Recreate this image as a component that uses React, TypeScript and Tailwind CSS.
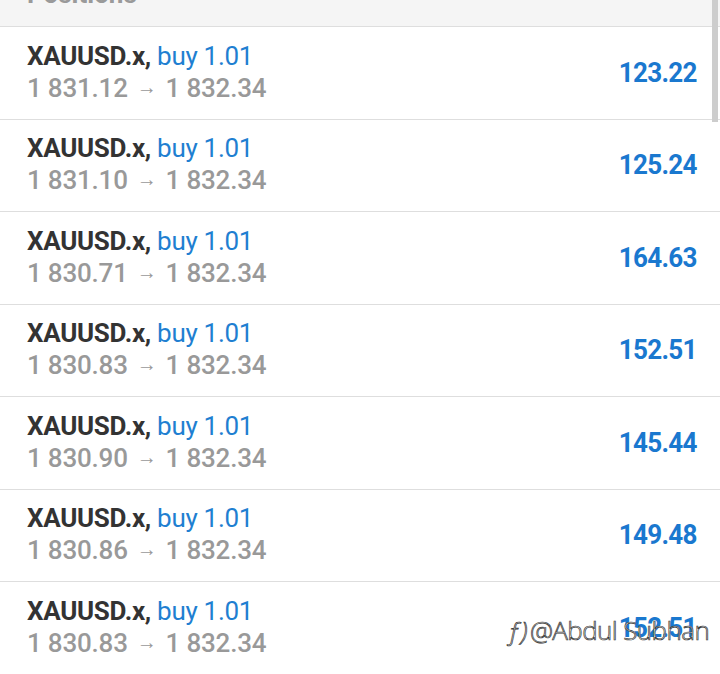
import React from 'react';

interface Position {
  symbol: string;
  side: string;
  volume: string;
  open: string;
  current: string;
  profit: string;
}

const positions: Position[] = [
  { symbol: 'XAUUSD.x', side: 'buy', volume: '1.01', open: '1 831.12', current: '1 832.34', profit: '123.22' },
  { symbol: 'XAUUSD.x', side: 'buy', volume: '1.01', open: '1 831.10', current: '1 832.34', profit: '125.24' },
  { symbol: 'XAUUSD.x', side: 'buy', volume: '1.01', open: '1 830.71', current: '1 832.34', profit: '164.63' },
  { symbol: 'XAUUSD.x', side: 'buy', volume: '1.01', open: '1 830.83', current: '1 832.34', profit: '152.51' },
  { symbol: 'XAUUSD.x', side: 'buy', volume: '1.01', open: '1 830.90', current: '1 832.34', profit: '145.44' },
  { symbol: 'XAUUSD.x', side: 'buy', volume: '1.01', open: '1 830.86', current: '1 832.34', profit: '149.48' },
  { symbol: 'XAUUSD.x', side: 'buy', volume: '1.01', open: '1 830.83', current: '1 832.34', profit: '152.51' },
];

const PositionRow: React.FC<{ p: Position }> = ({ p }) => (
  <div className="flex h-[92.5px] shrink-0 items-center justify-between border-b border-[#dedede] bg-white pl-[27px] pr-[23px]">
    <div className="flex flex-col">
      <div className="whitespace-nowrap text-[26px] leading-[32px] tracking-[-0.3px]">
        <span className="font-bold text-[#333333]">{p.symbol},</span>{' '}
        <span className="text-[#1f7fd1]">
          {p.side} {p.volume}
        </span>
      </div>
      <div className="whitespace-nowrap text-[26px] font-medium leading-[32px] tracking-[-0.2px] text-[#999999]">
        {p.open}
        <span className="mx-[9px] inline-block -translate-y-[3px] text-[20px]">→</span>
        {p.current}
      </div>
    </div>
    <div className="origin-right scale-x-[0.93] text-[28px] font-bold tracking-[-0.8px] text-[#1a78cf]">{p.profit}</div>
  </div>
);

const App: React.FC = () => {
  return (
    <div className="relative h-screen w-full overflow-hidden bg-white" style={{ fontFamily: 'Roboto, "Noto Sans", sans-serif' }}>
      <div className="h-[27px] overflow-hidden border-b border-[#dedede] bg-[#f5f5f5] pl-[27px]">
        <div className="-mt-[22px] text-[26px] font-bold leading-[32px] text-[#9a9a9a]">Positions</div>
      </div>
      <div className="flex flex-col">
        {positions.map((p, i) => (
          <PositionRow key={i} p={p} />
        ))}
      </div>

      {/* scroll thumb */}
      <div className="absolute right-[2px] top-0 h-[122px] w-[6px] bg-[#cdcdcd]" />

      {/* watermark */}
      <div
        className="absolute left-[507px] top-[617px] flex items-center gap-[3px] whitespace-nowrap text-[26px] font-light leading-none tracking-[-0.6px] text-white"
        style={{ fontFamily: '"Open Sans", sans-serif', WebkitTextStroke: '0.7px #333' }}
      >
        <span className="italic">ƒ)</span>
        <span>@Abdul Subhan</span>
      </div>
    </div>
  );
};

export default App;
